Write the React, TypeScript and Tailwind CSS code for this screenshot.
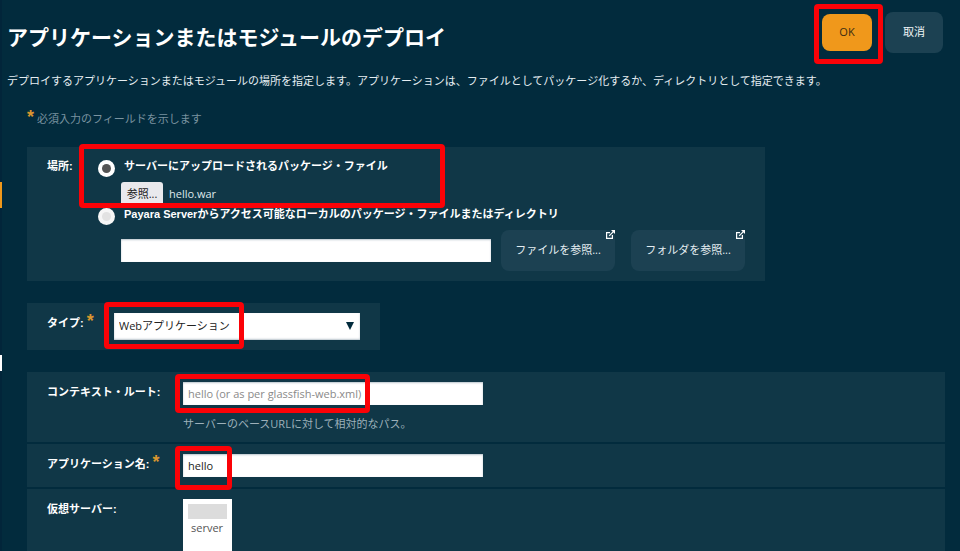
import { useState } from "react";
import type { ReactNode } from "react";

const UI_FONT = "font-['Open_Sans','Noto_Sans_CJK_JP',sans-serif]";
const LABEL_FONT = "font-['Liberation_Sans','Noto_Sans_CJK_JP',sans-serif]";

const textInput =
  "h-[23px] bg-white px-[5px] text-[11px] text-[#222] shadow-[inset_0_1px_2px_#b9c4cc] outline-none placeholder:text-[#8a8a8a]";

/** Red frame that points out the control it sits on. */
function Callout({ className }: { className: string }) {
  return (
    <span
      aria-hidden="true"
      className={`pointer-events-none absolute z-10 rounded border-5 border-[#fb0207] ${className}`}
    />
  );
}

function Required() {
  return <span className="h-4 font-['Liberation_Sans',sans-serif] text-lg leading-4 font-bold text-[#d9962f]">*</span>;
}

function LocationRadio({
  id,
  label,
  checked,
  onSelect,
}: {
  id: string;
  label: string;
  checked: boolean;
  onSelect: () => void;
}) {
  return (
    <div className="flex h-[19px] items-start gap-[9px]">
      <input
        id={id}
        type="radio"
        name="location"
        checked={checked}
        onChange={onSelect}
        className="mt-0.5 grid size-[17px] shrink-0 appearance-none place-items-center rounded-full bg-[#f6f6f6] before:size-[9px] before:rounded-full before:bg-[#e2e2e2] checked:bg-white checked:before:bg-[#545454]"
      />
      <label htmlFor={id} className={`${LABEL_FONT} text-[11px] leading-4 font-bold text-white`}>
        {label}
      </label>
    </div>
  );
}

function BrowseButton({ children }: { children: ReactNode }) {
  return (
    <button
      type="button"
      className="relative h-[41px] w-[114px] shrink-0 rounded-lg bg-[#1c4152] text-[11px] text-[#e4edf1]"
    >
      {children}
      <svg
        viewBox="0 0 9 9"
        className="absolute top-0 right-0 size-[9px]"
        fill="none"
        stroke="#fff"
        strokeWidth="1.2"
        aria-hidden="true"
      >
        <path d="M4 2.6H.6V8.4H6.4V5" />
        <path d="M3.2 5.8 7.6 1.4" />
        <path d="M5 0H9V4Z" fill="#fff" stroke="none" />
      </svg>
    </button>
  );
}

function FieldRow({
  label,
  htmlFor,
  required = false,
  className = "",
  children,
}: {
  label: string;
  htmlFor: string;
  required?: boolean;
  className?: string;
  children: ReactNode;
}) {
  return (
    <div className={`flex bg-[#103747] pt-2.5 pl-5 ${className}`}>
      <div className="flex w-[136px] shrink-0 gap-[3px]">
        <label htmlFor={htmlFor} className={`${LABEL_FONT} text-[11px] leading-5 font-bold text-white`}>
          {label}
        </label>
        {required && <Required />}
      </div>
      {children}
    </div>
  );
}

export default function App() {
  const [location, setLocation] = useState("upload");
  const [fileName, setFileName] = useState("hello.war");
  const [path, setPath] = useState("");
  const [contextRoot, setContextRoot] = useState("");
  const [appName, setAppName] = useState("hello");

  return (
    <div className={`${UI_FONT} flex h-screen overflow-hidden bg-[#022b3d] text-[11px] text-white`}>
      <div className="w-0.5 shrink-0 bg-[#02253a]" aria-hidden="true">
        <div className="mt-[182px] h-[26px] bg-[#f0981b]" />
        <div className="mt-[147px] h-4 bg-white" />
      </div>

      <main className="min-w-0 flex-1">
        <header className="flex items-start justify-between pt-3 pr-[17px] pl-[5px]">
          <h1 className={`${LABEL_FONT} pt-2.5 text-[21px] leading-8 font-bold`}>
            アプリケーションまたはモジュールのデプロイ
          </h1>
          <div className="flex items-center gap-[13px]">
            <div className="relative">
              <button type="button" className="block h-[37px] w-[50px] rounded-lg bg-[#f0981b] text-[#3b2c12]">
                OK
              </button>
              <Callout className="-top-2.5 -left-2 h-[60px] w-[69px]" />
            </div>
            <button type="button" className="h-[41px] w-[58px] rounded-lg bg-[#1c4152] text-[#f0f5f7]">
              取消
            </button>
          </div>
        </header>

        <p className="mt-[17px] pl-[5px] leading-5 whitespace-nowrap text-[#e6eef2]">
          デプロイするアプリケーションまたはモジュールの場所を指定します。アプリケーションは、ファイルとしてパッケージ化するか、ディレクトリとして指定できます。
        </p>

        <div className="mt-[18px] flex gap-[3px] pl-[25px] leading-5 text-[#7a93a0]">
          <Required />
          <span>必須入力のフィールドを示します</span>
        </div>

        <form className="pr-[15px] pl-[25px]" onSubmit={(e) => e.preventDefault()}>
          <fieldset className="mt-[18px] flex max-w-[738px] bg-[#103747] px-5 pt-[11px] pb-2.5">
            <div className={`${LABEL_FONT} w-[51px] shrink-0 leading-4 font-bold`}>場所:</div>
            <div className="min-w-0 flex-1">
              <div className="relative">
                <LocationRadio
                  id="loc-upload"
                  label="サーバーにアップロードされるパッケージ・ファイル"
                  checked={location === "upload"}
                  onSelect={() => setLocation("upload")}
                />
                <label className="mt-[5px] ml-[23px] flex h-6 items-center gap-1.5 text-[#dfe8ec]">
                  <span className="flex h-6 w-[42px] items-center justify-center rounded-[3px] bg-[#e9e9ed] text-[#222]">
                    参照...
                  </span>
                  {fileName}
                  <input
                    type="file"
                    className="sr-only"
                    onChange={(e) => setFileName(e.target.files?.[0]?.name ?? "")}
                  />
                </label>
                <Callout className="-top-[14px] -left-[19px] h-16 w-[366px]" />
              </div>
              <LocationRadio
                id="loc-local"
                label="Payara Serverからアクセス可能なローカルのパッケージ・ファイルまたはディレクトリ"
                checked={location === "local"}
                onSelect={() => setLocation("local")}
              />
              <div className="mt-[5px] ml-[23px] flex items-center">
                <input
                  type="text"
                  aria-label="パス"
                  value={path}
                  onChange={(e) => setPath(e.target.value)}
                  className={`${textInput} mr-2.5 min-w-0 flex-1`}
                />
                <div className="flex gap-4">
                  <BrowseButton>ファイルを参照...</BrowseButton>
                  <BrowseButton>フォルダを参照...</BrowseButton>
                </div>
              </div>
            </div>
          </fieldset>

          <div className="mt-[22px] flex max-w-[353px] bg-[#103747] px-5 py-2.5">
            <div className="flex w-[67px] shrink-0 gap-[3px]">
              <label htmlFor="app-type" className={`${LABEL_FONT} leading-5 font-bold`}>
                タイプ:
              </label>
              <Required />
            </div>
            <div className="relative flex-1">
              <select
                id="app-type"
                className="block h-[27px] w-full appearance-none bg-white px-[5px] text-[#222] shadow-[inset_0_-1px_2px_#b9c4cc] outline-none"
              >
                <option>Webアプリケーション</option>
              </select>
              <svg
                viewBox="0 0 8 8"
                className="pointer-events-none absolute top-[9px] right-1.5 size-2"
                aria-hidden="true"
              >
                <path d="M0 0H8L4 8Z" fill="#022b3d" />
              </svg>
              <Callout className="-top-[11px] -left-2.5 h-[47px] w-[140px]" />
            </div>
          </div>

          <div className="mt-[22px] flex flex-col gap-0.5">
            <FieldRow label="コンテキスト・ルート:" htmlFor="context-root" className="h-[70px]">
              <div className="relative w-[300px]">
                <input
                  id="context-root"
                  type="text"
                  placeholder="hello (or as per glassfish-web.xml)"
                  value={contextRoot}
                  onChange={(e) => setContextRoot(e.target.value)}
                  className={`${textInput} block w-full`}
                />
                <Callout className="-top-2 -left-2 h-[39px] w-[195px]" />
                <p className="mt-[9px] leading-5 text-[#9db0ba]">サーバーのベースURLに対して相対的なパス。</p>
              </div>
            </FieldRow>
            <FieldRow label="アプリケーション名:" htmlFor="app-name" required className="h-[43px]">
              <div className="relative w-[300px]">
                <input
                  id="app-name"
                  type="text"
                  value={appName}
                  onChange={(e) => setAppName(e.target.value)}
                  className={`${textInput} block w-full`}
                />
                <Callout className="-top-2 -left-2 h-11 w-[57px]" />
              </div>
            </FieldRow>
            <FieldRow label="仮想サーバー:" htmlFor="virtual-servers" className="h-24">
              <select
                id="virtual-servers"
                multiple
                className="h-[72px] w-[49px] overflow-hidden bg-white p-[5px] text-[#555] outline-none"
              >
                <option value="" className="mb-px h-[15px] bg-[#dcdcdc]" />
                <option value="server" className="h-4 px-[3px] leading-4">
                  server
                </option>
              </select>
            </FieldRow>
          </div>
        </form>
      </main>
    </div>
  );
}
